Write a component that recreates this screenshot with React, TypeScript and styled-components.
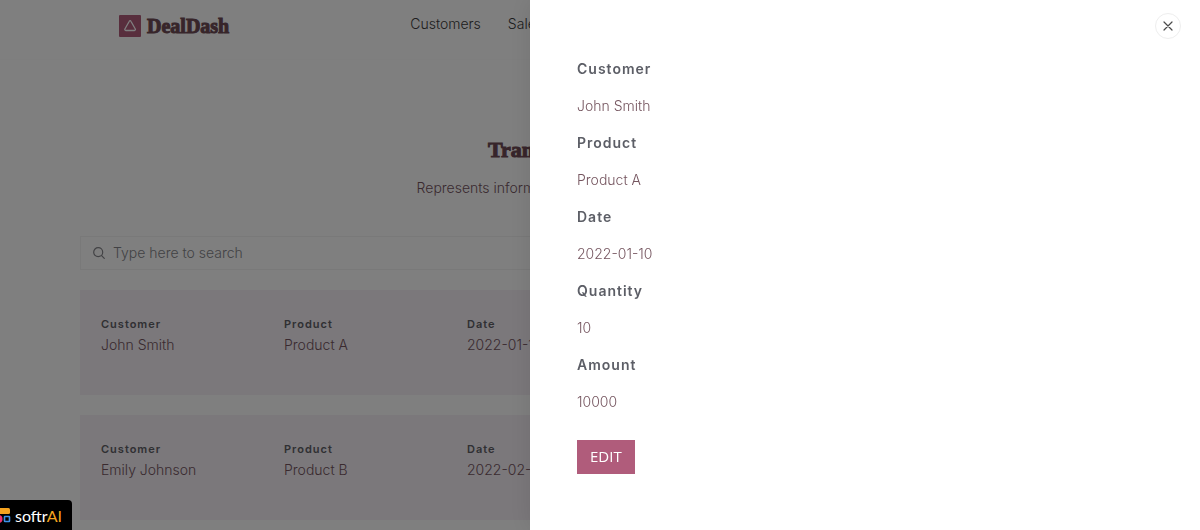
import React from "react";
import styled, { createGlobalStyle } from "styled-components";

const GlobalStyle = createGlobalStyle`
  *, *::before, *::after { box-sizing: border-box; }
  html, body { margin: 0; background: #ffffff; }
  body { font-family: Inter, "Liberation Sans", sans-serif; font-size: 14px; font-weight: 300; }
  h1, p, dl, dd { margin: 0; }
`;

const Page = styled.div`
  min-height: 100vh;
`;

const Header = styled.header`
  display: flex;
  align-items: flex-start;
  gap: 181px;
  height: 60px;
  padding: 14px 119px 0;
  border-bottom: 1px solid #fcfcfc;
  white-space: nowrap;
`;

const Brand = styled.a`
  display: flex;
  align-items: center;
  gap: 6px;
  height: 24px;
  color: #6e4a55;
  font-family: "Liberation Serif", serif;
  font-size: 20px;
  font-weight: 700;
  text-decoration: none;
  -webkit-text-stroke: 1px #6e4a55;
`;

const Nav = styled.nav`
  display: flex;
  gap: 27px;
`;

const NavLink = styled.a`
  color: #3c3c40;
  line-height: 20px;
  text-decoration: none;
`;

const Intro = styled.section`
  padding: 75px 24px 37px;
  text-align: center;
`;

const Title = styled.h1`
  color: #6e4a55;
  font-family: "Liberation Serif", serif;
  font-size: 22px;
  font-weight: 700;
  line-height: 30px;
  -webkit-text-stroke: 1px #6e4a55;
`;

const Subtitle = styled.p`
  margin-top: 12px;
  color: #75555f;
  line-height: 22px;
`;

const Content = styled.main`
  display: flex;
  flex-direction: column;
  gap: 20px;
  padding: 0 80px;
`;

const SearchBox = styled.label`
  display: flex;
  align-items: center;
  gap: 8px;
  height: 34px;
  padding: 0 12px;
  border: 1px solid #f2f2f2;
  color: #85858a;
`;

const SearchInput = styled.input`
  flex: 1;
  height: 20px;
  padding: 0 0 2px;
  border: 0;
  outline: 0;
  background: transparent;
  color: #4b4b50;
  font: inherit;
  &::placeholder { color: #85858a; opacity: 1; }
`;

const Card = styled.dl`
  display: grid;
  grid-template-columns: repeat(5, 1fr);
  height: 105px;
  padding: 24px 104px 0 21px;
  background: #f6f0f6;
`;

const CardLabel = styled.dt`
  color: #606066;
  font-size: 11px;
  font-weight: 600;
  letter-spacing: 1px;
  line-height: 20px;
`;

const CardValue = styled.dd`
  color: #75555f;
  line-height: 22px;
`;

const Overlay = styled.div`
  position: fixed;
  inset: 0;
  background: rgba(0, 0, 0, 0.5);
`;

const Drawer = styled.aside`
  position: fixed;
  top: 0;
  right: 0;
  bottom: 0;
  width: 670px;
  max-width: 100%;
  padding: 50px 47px;
  overflow: auto;
  background: #ffffff;
  box-shadow: 0 0 24px rgba(0, 0, 0, 0.1);
`;

const CloseButton = styled.button`
  position: absolute;
  top: 13px;
  right: 19px;
  display: grid;
  place-items: center;
  width: 26px;
  height: 26px;
  padding: 0;
  border: 1px solid #eeeeee;
  border-radius: 50%;
  background: #ffffff;
  color: #4a4a4a;
`;

const Details = styled.dl`
  line-height: 37px;
`;

const DetailLabel = styled.dt`
  color: #5c5e66;
  font-weight: 600;
  letter-spacing: 1px;
`;

const DetailValue = styled.dd`
  color: #75555f;
`;

const EditButton = styled.button`
  height: 34px;
  margin-top: 20px;
  padding: 0 13px 2px;
  border: 0;
  background: #b05c7b;
  color: #ffffff;
  font-family: "Open Sans", sans-serif;
  font-size: 15px;
  font-weight: 500;
`;

const SoftrBadge = styled.a`
  position: fixed;
  left: -12px;
  bottom: 0;
  display: flex;
  align-items: center;
  gap: 4px;
  width: 84px;
  height: 30px;
  padding-left: 6px;
  border-radius: 4px 4px 0 0;
  background: #000000;
  color: #ffffff;
  font-family: Lato, sans-serif;
  font-size: 16px;
  font-weight: 400;
  text-decoration: none;
`;

const BadgeAccent = styled.span`
  color: #f5a31f;
`;

interface Sale {
  customer: string;
  product: string;
  date: string;
  quantity: string;
  amount: string;
}

const sales: Sale[] = [
  { customer: "John Smith", product: "Product A", date: "2022-01-10", quantity: "10", amount: "10000" },
  { customer: "Emily Johnson", product: "Product B", date: "2022-02-05", quantity: "5", amount: "5000" },
];

const fields: { key: keyof Sale; label: string }[] = [
  { key: "customer", label: "Customer" },
  { key: "product", label: "Product" },
  { key: "date", label: "Date" },
  { key: "quantity", label: "Quantity" },
  { key: "amount", label: "Amount" },
];

export default function App() {
  return (
    <>
      <GlobalStyle />
      <Page>
        <Header>
          <Brand href="#">
            <svg width="22" height="22" viewBox="0 0 22 22" aria-hidden="true">
              <rect width="22" height="22" rx="1" fill="#b05c7b" />
              <path d="M10.3 6.2 5.9 14a1 1 0 0 0 .9 1.5h8.6a1 1 0 0 0 .9-1.5l-4.4-7.8a.9.9 0 0 0-1.6 0Z" fill="none" stroke="#fff" strokeWidth="1.3" strokeLinejoin="round" />
            </svg>
            DealDash
          </Brand>
          <Nav>
            <NavLink href="#">Customers</NavLink>
            <NavLink href="#">Sales</NavLink>
          </Nav>
        </Header>
        <Intro>
          <Title>Transaction Summaries</Title>
          <Subtitle>Represents information about the company transactions.</Subtitle>
        </Intro>
        <Content>
          <SearchBox>
            <svg width="12" height="12" viewBox="0 0 12 12" fill="none" stroke="currentColor" strokeWidth="1.2" strokeLinecap="round" aria-hidden="true">
              <circle cx="5.2" cy="5.2" r="4.5" />
              <path d="m8.6 8.6 2.7 2.7" />
            </svg>
            <SearchInput type="search" placeholder="Type here to search" aria-label="Search" />
          </SearchBox>
          {sales.map((sale) => (
            <Card key={sale.customer}>
              {fields.map(({ key, label }) => (
                <div key={key}>
                  <CardLabel>{label}</CardLabel>
                  <CardValue>{sale[key]}</CardValue>
                </div>
              ))}
            </Card>
          ))}
        </Content>
      </Page>
      <Overlay />
      <Drawer role="dialog" aria-label="Transaction details">
        <CloseButton type="button" aria-label="Close">
          <svg width="10" height="10" viewBox="0 0 10 10" stroke="currentColor" strokeWidth="1.2" strokeLinecap="round" aria-hidden="true">
            <path d="m1 1 8 8M9 1 1 9" />
          </svg>
        </CloseButton>
        <Details>
          {fields.map(({ key, label }) => (
            <div key={key}>
              <DetailLabel>{label}</DetailLabel>
              <DetailValue>{sales[0][key]}</DetailValue>
            </div>
          ))}
        </Details>
        <EditButton type="button">EDIT</EditButton>
      </Drawer>
      <SoftrBadge href="#">
        <svg width="17" height="15" viewBox="0 0 17 15" aria-hidden="true">
          <rect x="0" y="0" width="16" height="6" rx="1.5" fill="#f5a31f" />
          <circle cx="4.5" cy="11" r="4" fill="#f0326f" />
          <rect x="10.5" y="8.5" width="5" height="5" rx="0.5" fill="#000" stroke="#3d92e8" strokeWidth="1.6" />
        </svg>
        <span>softr<BadgeAccent>AI</BadgeAccent></span>
      </SoftrBadge>
    </>
  );
}
